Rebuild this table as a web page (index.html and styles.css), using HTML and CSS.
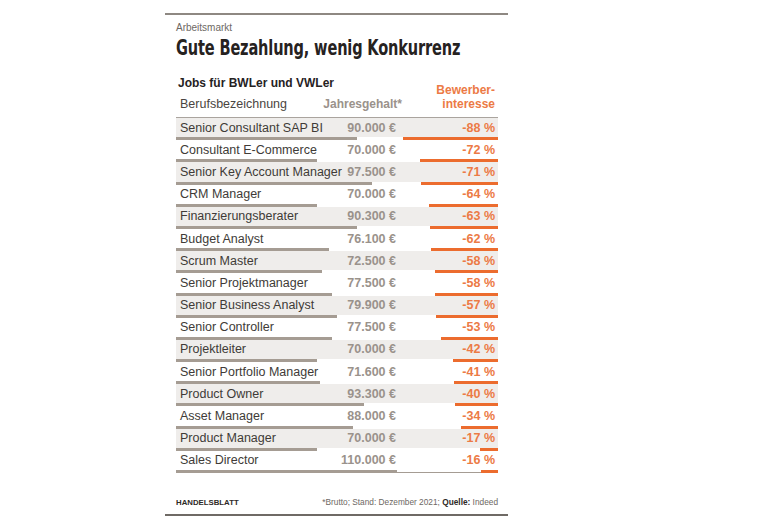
FILE: index.html
```html
<!DOCTYPE html>
<html lang="de">
<head>
<meta charset="utf-8">
<title>Gute Bezahlung, wenig Konkurrenz</title>
<link rel="stylesheet" href="styles.css">
</head>
<body>
<div class="chart">
  <div class="kicker">Arbeitsmarkt</div>
  <h1 class="title"><span class="title-inner">Gute Bezahlung, wenig Konkurrenz</span></h1>
  <div class="table">
    <div class="head">
      <div class="head-left">
        <div class="subtitle">Jobs für BWLer und VWLer</div>
        <div class="col-job">Berufsbezeichnung</div>
      </div>
      <div class="col-sal">Jahresgehalt*</div>
      <div class="col-pct">Bewerber-<br>interesse</div>
    </div>

    <div class="row shade"><div class="cells"><span class="job">Senior Consultant SAP BI</span><span class="sal">90.000 €</span><span class="pct">-88 %</span></div><div class="bars"><span class="sbar" style="width:181px"></span><span class="pbar" style="width:95px"></span></div></div>
    <div class="row"><div class="cells"><span class="job">Consultant E-Commerce</span><span class="sal">70.000 €</span><span class="pct">-72 %</span></div><div class="bars"><span class="sbar" style="width:141px"></span><span class="pbar" style="width:78px"></span></div></div>
    <div class="row shade"><div class="cells"><span class="job">Senior Key Account Manager</span><span class="sal">97.500 €</span><span class="pct">-71 %</span></div><div class="bars"><span class="sbar" style="width:196px"></span><span class="pbar" style="width:77px"></span></div></div>
    <div class="row"><div class="cells"><span class="job">CRM Manager</span><span class="sal">70.000 €</span><span class="pct">-64 %</span></div><div class="bars"><span class="sbar" style="width:141px"></span><span class="pbar" style="width:69px"></span></div></div>
    <div class="row shade"><div class="cells"><span class="job">Finanzierungsberater</span><span class="sal">90.300 €</span><span class="pct">-63 %</span></div><div class="bars"><span class="sbar" style="width:181px"></span><span class="pbar" style="width:68px"></span></div></div>
    <div class="row"><div class="cells"><span class="job">Budget Analyst</span><span class="sal">76.100 €</span><span class="pct">-62 %</span></div><div class="bars"><span class="sbar" style="width:153px"></span><span class="pbar" style="width:67px"></span></div></div>
    <div class="row shade"><div class="cells"><span class="job">Scrum Master</span><span class="sal">72.500 €</span><span class="pct">-58 %</span></div><div class="bars"><span class="sbar" style="width:146px"></span><span class="pbar" style="width:63px"></span></div></div>
    <div class="row"><div class="cells"><span class="job">Senior Projektmanager</span><span class="sal">77.500 €</span><span class="pct">-58 %</span></div><div class="bars"><span class="sbar" style="width:156px"></span><span class="pbar" style="width:63px"></span></div></div>
    <div class="row shade"><div class="cells"><span class="job">Senior Business Analyst</span><span class="sal">79.900 €</span><span class="pct">-57 %</span></div><div class="bars"><span class="sbar" style="width:161px"></span><span class="pbar" style="width:62px"></span></div></div>
    <div class="row"><div class="cells"><span class="job">Senior Controller</span><span class="sal">77.500 €</span><span class="pct">-53 %</span></div><div class="bars"><span class="sbar" style="width:156px"></span><span class="pbar" style="width:57px"></span></div></div>
    <div class="row shade"><div class="cells"><span class="job">Projektleiter</span><span class="sal">70.000 €</span><span class="pct">-42 %</span></div><div class="bars"><span class="sbar" style="width:141px"></span><span class="pbar" style="width:45px"></span></div></div>
    <div class="row"><div class="cells"><span class="job">Senior Portfolio Manager</span><span class="sal">71.600 €</span><span class="pct">-41 %</span></div><div class="bars"><span class="sbar" style="width:144px"></span><span class="pbar" style="width:44px"></span></div></div>
    <div class="row shade"><div class="cells"><span class="job">Product Owner</span><span class="sal">93.300 €</span><span class="pct">-40 %</span></div><div class="bars"><span class="sbar" style="width:188px"></span><span class="pbar" style="width:43px"></span></div></div>
    <div class="row"><div class="cells"><span class="job">Asset Manager</span><span class="sal">88.000 €</span><span class="pct">-34 %</span></div><div class="bars"><span class="sbar" style="width:177px"></span><span class="pbar" style="width:37px"></span></div></div>
    <div class="row shade"><div class="cells"><span class="job">Product Manager</span><span class="sal">70.000 €</span><span class="pct">-17 %</span></div><div class="bars"><span class="sbar" style="width:141px"></span><span class="pbar" style="width:18px"></span></div></div>
    <div class="row"><div class="cells"><span class="job">Sales Director</span><span class="sal">110.000 €</span><span class="pct">-16 %</span></div><div class="bars last"><span class="sbar" style="width:221px"></span><span class="pbar" style="width:17px"></span></div></div>
  </div>
  <div class="footer">
    <span class="brand">HANDELSBLATT</span>
    <span class="source">*Brutto; Stand: Dezember 2021; <b>Quelle:</b> Indeed</span>
  </div>
</div>
</body>
</html>
```

FILE: styles.css
```css
* { box-sizing: border-box; }

html, body {
  margin: 0;
  padding: 0;
  background: #ffffff;
}

body {
  font-family: "Liberation Sans", Arial, sans-serif;
  color: #3b3733;
}

.chart {
  width: 343px;
  margin: 13px 0 0 165px;
  border-top: 2px solid #8e8882;
  border-bottom: 2px solid #6f6a65;
  padding: 0 10px 0 11px;
}

.kicker {
  margin-top: 7px;
  font-size: 10px;
  line-height: 12px;
  color: #6d6863;
}

.title {
  margin: 0;
  font-family: "DejaVu Sans Condensed", "DejaVu Sans", sans-serif;
  font-weight: bold;
  font-size: 22px;
  line-height: 28px;
  color: #26221f;
  white-space: nowrap;
}

.title-inner {
  display: inline-block;
  transform: scaleX(0.735);
  transform-origin: left center;
  letter-spacing: -0.2px;
}

.table {
  margin-top: 14px;
}

.head {
  display: grid;
  grid-template-columns: minmax(0, 1fr) auto 99px;
  align-items: end;
  padding: 0 3px 5px 2px;
  border-bottom: 1px solid #aaa49e;
}

.head-left {
  white-space: nowrap;
}

.subtitle {
  font-weight: bold;
  font-size: 12px;
  line-height: 14px;
  color: #26221f;
  margin-bottom: 7px;
}

.col-job {
  font-size: 12.5px;
  line-height: 15px;
  padding-left: 2px;
  color: #4a4541;
}

.col-sal {
  font-weight: bold;
  font-size: 12px;
  line-height: 15px;
  color: #9a928b;
  text-align: right;
  margin-right: -6px;
}

.col-pct {
  font-weight: bold;
  font-size: 12px;
  line-height: 14px;
  color: #ec7a45;
  text-align: right;
  margin-bottom: 1px;
}

.row {
  height: 22.2px;
  display: flex;
  flex-direction: column;
}

.cells {
  flex: 1;
  display: grid;
  grid-template-columns: 1fr auto 99px;
  align-items: center;
  padding: 0 3px 0 4px;
  font-size: 12.5px;
  white-space: nowrap;
}

.row.shade .cells {
  background: #efedeb;
}

.job {
  color: #403b37;
}

.sal {
  font-weight: bold;
  color: #9a928b;
  text-align: right;
}

.pct {
  font-weight: bold;
  color: #ec7a45;
  text-align: right;
}

.bars {
  height: 3px;
  display: flex;
  justify-content: space-between;
}

.bars.last {
  background: linear-gradient(#a59c93, #a59c93) left bottom / 100% 1px no-repeat;
}

.sbar {
  display: block;
  height: 3px;
  background: #a59c93;
}

.pbar {
  display: block;
  height: 3px;
  background: #ec6c2e;
}

.footer {
  display: flex;
  justify-content: space-between;
  align-items: baseline;
  padding: 24px 0 6px 0;
  line-height: 11px;
  color: #6d6863;
}

.brand {
  font-weight: bold;
  font-size: 7.8px;
  color: #2e2a27;
}

.source {
  font-size: 8.3px;
}

.source b {
  color: #2e2a27;
}
```
